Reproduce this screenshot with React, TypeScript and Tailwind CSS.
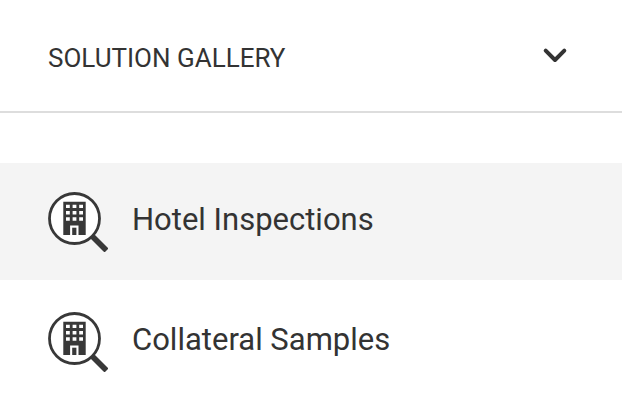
import { useState } from "react";

const solutions = ["Hotel Inspections", "Collateral Samples"];

const InspectionIcon = () => (
  <svg className="h-15 w-15 shrink-0" viewBox="0 0 60 60" fill="none" aria-hidden="true">
    <path d="M43.5 43.5 58.5 58.5" stroke="#383838" strokeWidth="5.6" />
    <circle cx="26.5" cy="26.5" r="25" fill="#fff" stroke="#383838" strokeWidth="2.8" />
    <path
      fill="#383838"
      fillRule="evenodd"
      d="M15.3 9.8h22.4V43h-7.2V33.4h-8.4V43h-6.8z
        M18 12.7v3.4h3.8v-3.4z M24.6 12.7v3.4h3.8v-3.4z M31.2 12.7v3.4h3.8v-3.4z
        M18 19v3.4h3.8v-3.4z M24.6 19v3.4h3.8v-3.4z M31.2 19v3.4h3.8v-3.4z
        M18 25.3v3.4h3.8v-3.4z M24.6 25.3v3.4h3.8v-3.4z M31.2 25.3v3.4h3.8v-3.4z"
    />
    <path d="M24.2 35.7h4.2V43h-4.2z" fill="#383838" />
  </svg>
);

const App = () => {
  const [open, setOpen] = useState(true);
  const [selected, setSelected] = useState("Hotel Inspections");

  return (
    <div className="bg-white font-[Roboto,sans-serif] text-[#333333]">
      <button
        type="button"
        aria-expanded={open}
        onClick={() => setOpen(!open)}
        className="flex w-full cursor-pointer items-center justify-between border-b-2 border-[#dddddd] pt-10 pr-14 pb-[35px] pl-12 text-left"
      >
        <span className="text-[26px] leading-9">SOLUTION GALLERY</span>
        <svg className="h-6 w-6 overflow-visible" viewBox="0 0 24 24" fill="none" aria-hidden="true">
          <path
            d="M3.7 4.7 13 14 22.3 4.7"
            stroke="#333333"
            strokeWidth="4"
            strokeLinecap="round"
            strokeLinejoin="round"
          />
        </svg>
      </button>
      {open && (
        <ul className="flex flex-col gap-[3px] pt-[50px]">
          {solutions.map((name) => (
            <li key={name}>
              <button
                type="button"
                onClick={() => setSelected(name)}
                className={`flex w-full cursor-pointer items-start gap-6 px-12 pt-[29px] pb-7 text-left ${
                  selected === name ? "bg-[#f4f4f4]" : "bg-white"
                }`}
              >
                <InspectionIcon />
                <span className="text-[31px] leading-14">{name}</span>
              </button>
            </li>
          ))}
        </ul>
      )}
    </div>
  );
};

export default App;
